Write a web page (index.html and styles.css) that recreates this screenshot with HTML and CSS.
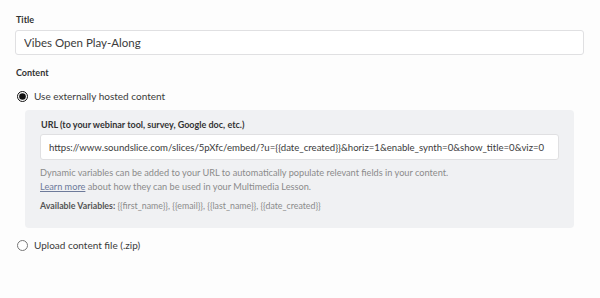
FILE: index.html
```html
<!DOCTYPE html>
<html lang="en">

<head>
    <meta charset="UTF-8">
    <meta name="viewport" content="width=device-width, initial-scale=1.0">
    <title>Multimedia Lesson</title>
    <link rel="stylesheet" href="styles.css">
</head>

<body>
    <div class="form">
        <div class="field">
            <label class="field-label" for="title">Title</label>
            <input type="text" id="title" class="text-input" value="Vibes Open Play-Along">
        </div>

        <div class="field">
            <div class="field-label content-label">Content</div>

            <label class="radio-row">
                <input type="radio" name="content" checked>
                <span>Use externally hosted content</span>
            </label>

            <div class="panel">
                <label class="panel-label" for="url">URL (to your webinar tool, survey, Google doc, etc.)</label>
                <input type="text" id="url" class="text-input url-input" value="https://www.soundslice.com/slices/5pXfc/embed/?u={{date_created}}&amp;horiz=1&amp;enable_synth=0&amp;show_title=0&amp;viz=0">
                <p class="help">Dynamic variables can be added to your URL to automatically populate relevant fields in your content.<br><a href="#">Learn more</a> about how they can be used in your Multimedia Lesson.</p>
                <p class="help vars"><strong>Available Variables:</strong> {{first_name}}, {{email}}, {{last_name}}, {{date_created}}</p>
            </div>

            <label class="radio-row">
                <input type="radio" name="content">
                <span>Upload content file (.zip)</span>
            </label>
        </div>
    </div>
</body>

</html>
```

FILE: styles.css
```css
* {
    margin: 0;
    padding: 0;
    box-sizing: border-box;
}

body {
    font-family: Lato, 'Liberation Sans', sans-serif;
    background-color: #fdfdfd;
    color: #3b3b3b;
}

.form {
    padding: 14px 16px 0 15px;
    width: 600px;
}

.field {
    margin-bottom: 12px;
}

.field-label {
    display: block;
    font-size: 9px;
    font-weight: 700;
    color: #333;
    margin-bottom: 5px;
    padding-left: 1px;
}

.content-label {
    margin-bottom: 8px;
}

.text-input {
    width: 100%;
    height: 25px;
    padding: 0 8px;
    border: 1px solid #e0e0e2;
    border-radius: 3px;
    background: #fff;
    font-family: inherit;
    font-size: 11.5px;
    color: #3b3b3b;
}

.radio-row {
    display: flex;
    align-items: center;
    gap: 6px;
    font-size: 10px;
    color: #3b3b3b;
    height: 20px;
    padding-left: 2px;
}

.radio-row input {
    width: 11px;
    height: 11px;
    margin: 0;
    accent-color: #111;
}

.panel {
    margin: 4px 10px 7px 10px;
    background-color: #f0f1f3;
    border-radius: 4px;
    padding: 9px 15px 15px 15px;
}

.panel-label {
    display: block;
    font-size: 9px;
    font-weight: 700;
    color: #333;
    margin-bottom: 4px;
    padding-left: 1px;
}

.url-input {
    height: 26px;
    font-size: 9.6px;
}

.help {
    font-size: 9.2px;
    color: #8b8b8b;
    line-height: 14px;
    margin-top: 6px;
}

.help a {
    color: #6d7a9a;
}

.vars {
    margin-top: 5px;
    font-size: 8.8px;
}

.vars strong {
    color: #555;
}
```
